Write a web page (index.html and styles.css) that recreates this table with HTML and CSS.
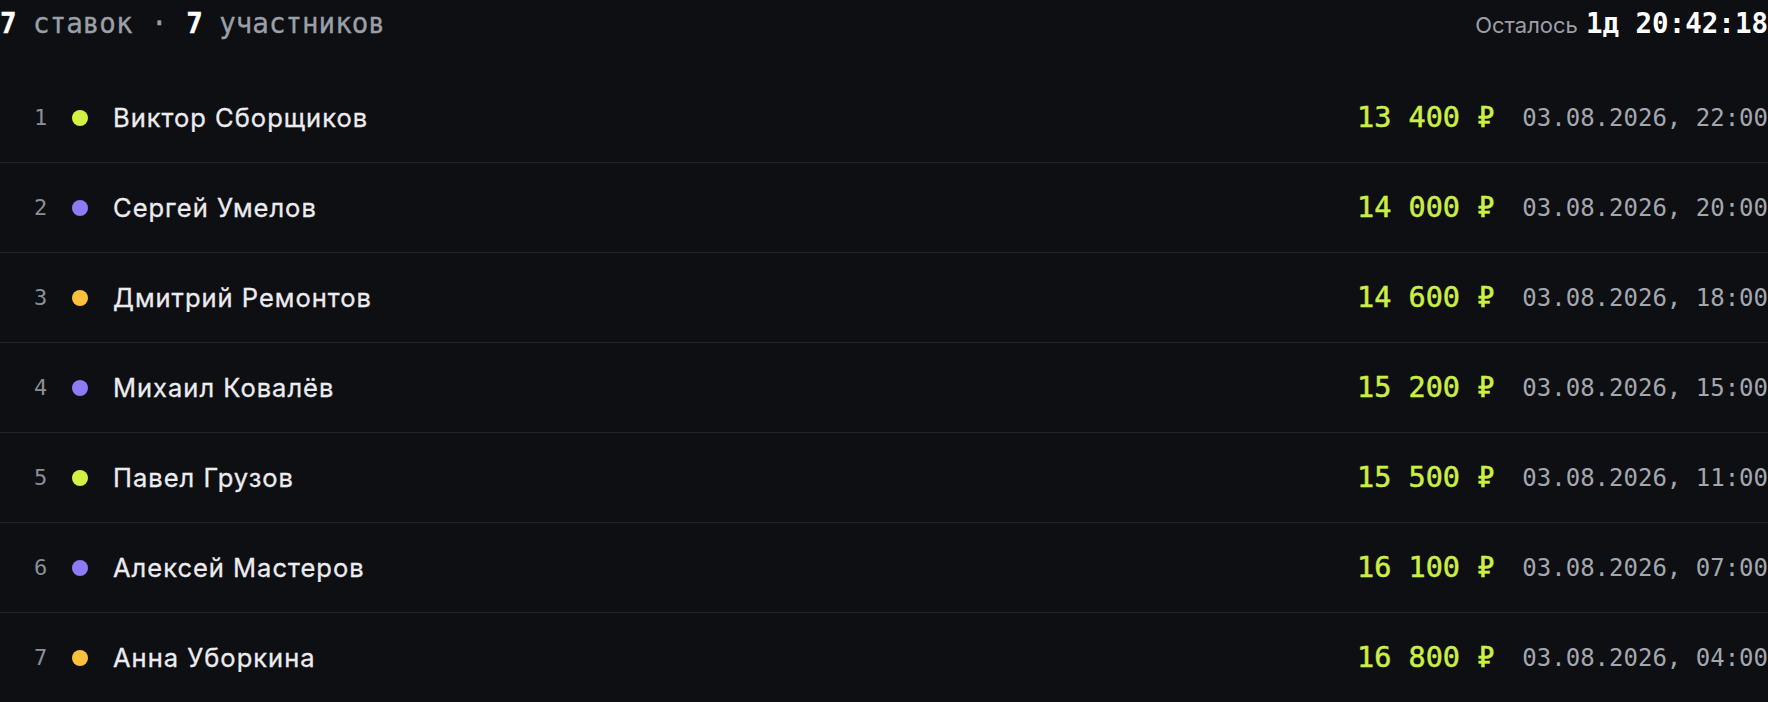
FILE: index.html
```html
<!DOCTYPE html>
<html lang="ru">
<head>
    <meta charset="UTF-8">
    <meta name="viewport" content="width=device-width, initial-scale=1.0">
    <title>Ставки</title>
    <link rel="stylesheet" href="styles.css">
</head>
<body>

<div class="bids">
    <div class="bids-head">
        <div class="summary"><b>7</b> ставок <span class="sep">·</span> <b>7</b> участников</div>
        <div class="timer">
            <span class="timer-label">Осталось</span>
            <span class="timer-value">1д 20:42:18</span>
        </div>
    </div>

    <ul class="bid-list">
        <li class="bid">
            <span class="rank">1</span>
            <span class="dot lime"></span>
            <span class="name">Виктор Сборщиков</span>
            <span class="amount">13 400 ₽</span>
            <span class="date">03.08.2026, 22:00</span>
        </li>
        <li class="bid">
            <span class="rank">2</span>
            <span class="dot violet"></span>
            <span class="name">Сергей Умелов</span>
            <span class="amount">14 000 ₽</span>
            <span class="date">03.08.2026, 20:00</span>
        </li>
        <li class="bid">
            <span class="rank">3</span>
            <span class="dot amber"></span>
            <span class="name">Дмитрий Ремонтов</span>
            <span class="amount">14 600 ₽</span>
            <span class="date">03.08.2026, 18:00</span>
        </li>
        <li class="bid">
            <span class="rank">4</span>
            <span class="dot violet"></span>
            <span class="name">Михаил Ковалёв</span>
            <span class="amount">15 200 ₽</span>
            <span class="date">03.08.2026, 15:00</span>
        </li>
        <li class="bid">
            <span class="rank">5</span>
            <span class="dot lime"></span>
            <span class="name">Павел Грузов</span>
            <span class="amount">15 500 ₽</span>
            <span class="date">03.08.2026, 11:00</span>
        </li>
        <li class="bid">
            <span class="rank">6</span>
            <span class="dot violet"></span>
            <span class="name">Алексей Мастеров</span>
            <span class="amount">16 100 ₽</span>
            <span class="date">03.08.2026, 07:00</span>
        </li>
        <li class="bid">
            <span class="rank">7</span>
            <span class="dot amber"></span>
            <span class="name">Анна Уборкина</span>
            <span class="amount">16 800 ₽</span>
            <span class="date">03.08.2026, 04:00</span>
        </li>
    </ul>
</div>

</body>
</html>
```

FILE: styles.css
```css
body {
    margin: 0;
    padding: 0;
    background-color: #0e0f13;
    color: #e9e9ec;
    font-family: Inter, "Noto Sans", sans-serif;
    overflow: hidden;
}

.bids {
    width: 1768px;
}

.bids-head {
    display: flex;
    justify-content: space-between;
    align-items: center;
    height: 45px;
    margin-bottom: 28px;
}

.summary {
    font-family: "DejaVu Sans Mono", "Liberation Mono", monospace;
    font-size: 27.5px;
    color: #9ba0a8;
    -webkit-text-stroke: 0.3px currentColor;
}

.summary b {
    color: #ffffff;
    font-weight: bold;
}

.sep {
    margin: 0 2px;
}

.timer {
    display: flex;
    align-items: baseline;
    gap: 8px;
}

.timer-label {
    font-size: 22px;
    color: #9ba0a8;
}

.timer-value {
    font-family: "DejaVu Sans Mono", "Liberation Mono", monospace;
    font-size: 27.5px;
    font-weight: bold;
    color: #ffffff;
}

.bid-list {
    list-style: none;
    margin: 0;
    padding: 0;
}

.bid {
    display: flex;
    align-items: center;
    height: 89px;
    padding-left: 34px;
    border-bottom: 1px solid #23252b;
}

.rank {
    width: 38px;
    font-family: "DejaVu Sans Mono", "Liberation Mono", monospace;
    font-size: 22px;
    color: #8a8f97;
}

.dot {
    width: 16px;
    height: 16px;
    border-radius: 50%;
}

.lime {
    background-color: #d2f243;
}

.violet {
    background-color: #8b7cf6;
}

.amber {
    background-color: #fbc13d;
}

.name {
    flex: 1;
    margin-left: 25px;
    font-size: 25.5px;
    letter-spacing: 1px;
    color: #ececef;
    -webkit-text-stroke: 0.3px currentColor;
}

.amount {
    font-family: "DejaVu Sans Mono", "Liberation Mono", monospace;
    font-size: 28.5px;
    color: #cdef45;
    margin-right: 28px;
    -webkit-text-stroke: 0.5px currentColor;
}

.date {
    font-family: "DejaVu Sans Mono", "Liberation Mono", monospace;
    font-size: 24px;
    color: #a3a7ae;
}
```
